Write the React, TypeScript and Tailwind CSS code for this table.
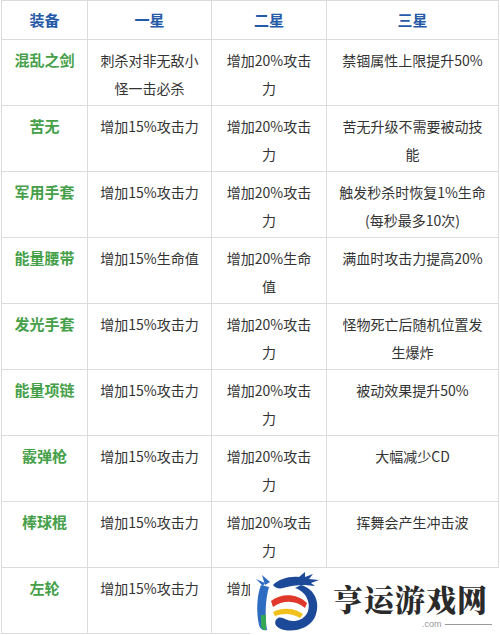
const rows = [
  { name: "混乱之剑", one: "刺杀对非无敌小怪一击必杀", two: "增加20%攻击力", three: "禁锢属性上限提升50%" },
  { name: "苦无", one: "增加15%攻击力", two: "增加20%攻击力", three: "苦无升级不需要被动技能" },
  { name: "军用手套", one: "增加15%攻击力", two: "增加20%攻击力", three: "触发秒杀时恢复1%生命(每秒最多10次)" },
  { name: "能量腰带", one: "增加15%生命值", two: "增加20%生命值", three: "满血时攻击力提高20%" },
  { name: "发光手套", one: "增加15%攻击力", two: "增加20%攻击力", three: "怪物死亡后随机位置发生爆炸" },
  { name: "能量项链", one: "增加15%攻击力", two: "增加20%攻击力", three: "被动效果提升50%" },
  { name: "霰弹枪", one: "增加15%攻击力", two: "增加20%攻击力", three: "大幅减少CD" },
  { name: "棒球棍", one: "增加15%攻击力", two: "增加20%攻击力", three: "挥舞会产生冲击波" },
  { name: "左轮", one: "增加15%攻击力", two: "增加20%攻击力", three: "" },
]

const headers = ["装备", "一星", "二星", "三星"]

function Logo() {
  return (
    <div className="absolute left-[250px] top-[568px] w-[250px] h-[67px] bg-white">
      <svg className="absolute left-[3px] top-[3px]" width="70" height="62" viewBox="0 0 70 62">
        {/* left blue stroke with green foot */}
        <path d="M8 14 C4 24 3 40 6 54 C7 58 10 60 14 59 C12 46 12 30 16 16 Z" fill="#2d6cc0" />
        <path d="M8 44 L13 44 L13 59 C10 59 8 57 8 54 Z" fill="#35a853" />
        <path d="M9 4 L12 14 L17 11 Z" fill="#2d6cc0" />
        <path d="M3 8 L10 15 L12 12 Z" fill="#2d6cc0" />
        {/* dragon head and horns */}
        <path d="M20 14 C26 8 36 5 46 6 L52 1 L52 6 L60 3 L56 8 L66 9 L58 12 L62 15 L52 14 C44 14 36 15 30 17 C26 18 22 17 20 14 Z" fill="#1d4a98" />
        {/* swirl body */}
        <path d="M48 14 C62 18 68 32 62 46 C56 58 40 62 28 58 C22 56 20 50 25 47 C29 45 33 50 40 50 C52 50 58 40 55 30 C53 23 48 19 42 17 Z" fill="#1d4a98" />
        {/* red band */}
        <path d="M18 30 C28 22 44 22 54 32 L52 37 C43 29 30 29 20 36 Z" fill="#e0392b" />
        {/* yellow band */}
        <path d="M20 41 C30 36 41 37 50 43 L47 47 C39 42 30 42 22 45 Z" fill="#f1c01a" />
      </svg>
      <div className="absolute left-[83px] top-[14px] text-[30px] leading-[32px] font-black tracking-[1px] text-[#2a2a2a] [font-family:'Noto_Serif_CJK_SC','Noto_Sans_CJK_SC',serif]">
        亨运游戏网
      </div>
      <div className="absolute left-[172px] top-[50px] flex items-center gap-[3px]">
        <span className="text-[9px] leading-[12px] text-[#999] [font-family:'Liberation_Sans',sans-serif]">.com</span>
        <span className="block w-[47px] h-px bg-[#999]" />
      </div>
    </div>
  )
}

export default function App() {
  return (
    <div className="relative w-[500px] h-[635px] overflow-hidden bg-white [font-family:'Noto_Sans_CJK_SC',sans-serif]">
      <table className="ml-px table-fixed border-collapse w-[497px] text-center">
        <colgroup>
          <col className="w-[86px]" />
          <col className="w-[124px]" />
          <col className="w-[115px]" />
          <col className="w-[172px]" />
        </colgroup>
        <thead>
          <tr>
            {headers.map((h) => (
              <th
                key={h}
                className="border border-[#dcdcdc] px-[10px] pt-[5px] pb-[5px] text-[15px] leading-[28px] font-bold text-[#2459a8]"
              >
                {h}
              </th>
            ))}
          </tr>
        </thead>
        <tbody>
          {rows.map((r) => (
            <tr key={r.name}>
              <td className="border border-[#dcdcdc] px-[6px] pt-[6px] pb-[3px] align-top text-[15px] leading-[28px] font-bold text-[#45a049]">
                {r.name}
              </td>
              {[r.one, r.two, r.three].map((t, i) => (
                <td
                  key={i}
                  className="border border-[#dcdcdc] px-[10px] pt-[6px] pb-[3px] align-top text-[14px] leading-[28px] text-[#333] break-all"
                >
                  <div className="min-h-[56px]">{t}</div>
                </td>
              ))}
            </tr>
          ))}
        </tbody>
      </table>
      <Logo />
    </div>
  )
}
